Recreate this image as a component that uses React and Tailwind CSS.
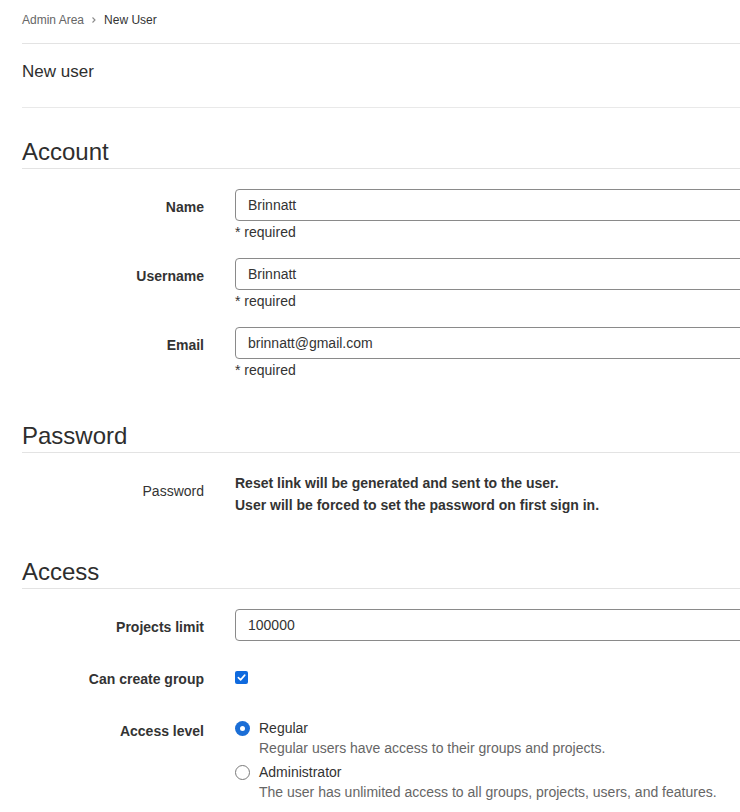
import React from "react"

const font = { fontFamily: '"Liberation Sans", Arial, sans-serif' }

const SectionTitle = ({ children, className = "" }) => (
  <h3 className={`text-[24px] leading-[32px] text-[#2e2e2e] border-b border-[#e3e3e3] ${className}`}>
    {children}
  </h3>
)

const TextRow = ({ label, value, className = "" }) => (
  <div className={`grid grid-cols-[182px_1fr] gap-x-[31px] ${className}`}>
    <label className="text-right text-[14px] leading-[20px] pt-[8px] font-bold text-[#333]">{label}</label>
    <div>
      <div className="w-[600px] h-[32px] border border-[#8a8a8a] rounded-[4px] flex items-center px-[12px] text-[14px] text-[#333]">
        {value}
      </div>
      <p className="pt-[1px] text-[14px] leading-[20px] text-[#333]">* required</p>
    </div>
  </div>
)

const Radio = ({ checked }) =>
  checked ? (
    <span className="w-[15px] h-[15px] rounded-full bg-[#1b6ed6] flex items-center justify-center shrink-0">
      <span className="w-[5px] h-[5px] rounded-full bg-white" />
    </span>
  ) : (
    <span className="w-[15px] h-[15px] rounded-full border border-[#7a7a7a] bg-white shrink-0" />
  )

export default function App() {
  return (
    <div className="w-[740px] min-h-[812px] bg-white overflow-hidden pl-[22px] text-[#333]" style={font}>
      {/* breadcrumb */}
      <div className="flex items-center pt-[10px] pb-[13px] text-[12px] leading-[20px] border-b border-[#e3e3e3]">
        <span className="text-[#666]">Admin Area</span>
        <svg className="mx-[6px]" width="8" height="8" viewBox="0 0 8 8" fill="none">
          <path d="M2.5 1.5L5 4L2.5 6.5" stroke="#8a8a8a" strokeWidth="1.1" />
        </svg>
        <span className="text-[#333]">New User</span>
      </div>

      <div className="pt-[16px] pb-[23px] border-b border-[#e9e9e9]">
        <h2 className="text-[17px] leading-[24px] text-[#2e2e2e]">New user</h2>
      </div>

      <SectionTitle className="mt-[28px]">Account</SectionTitle>
      <div className="pt-[20px]">
        <TextRow label="Name" value="Brinnatt" className="mb-[16px]" />
        <TextRow label="Username" value="Brinnatt" className="mb-[16px]" />
        <TextRow label="Email" value="brinnatt@gmail.com" />
      </div>

      <SectionTitle className="mt-[40px]">Password</SectionTitle>
      <div className="grid grid-cols-[182px_1fr] gap-x-[31px] pt-[19px]">
        <label className="text-right text-[14px] leading-[20px] pt-[9px] text-[#333]">Password</label>
        <div className="text-[14px] leading-[22px] font-bold text-[#333]">
          <p>Reset link will be generated and sent to the user.</p>
          <p>User will be forced to set the password on first sign in.</p>
        </div>
      </div>

      <SectionTitle className="mt-[40px]">Access</SectionTitle>
      <div className="pt-[20px]">
        <div className="grid grid-cols-[182px_1fr] gap-x-[31px]">
          <label className="text-right text-[14px] leading-[20px] pt-[8px] font-bold text-[#333]">Projects limit</label>
          <div className="w-[600px] h-[32px] border border-[#8a8a8a] rounded-[4px] flex items-center px-[12px] text-[14px] text-[#333]">
            100000
          </div>
        </div>

        <div className="grid grid-cols-[182px_1fr] gap-x-[31px] mt-[28px]">
          <label className="text-right text-[14px] leading-[20px] font-bold text-[#333]">Can create group</label>
          <div className="pt-[2px]">
            <span className="w-[13px] h-[13px] rounded-[2px] bg-[#0f6ade] flex items-center justify-center">
              <svg width="9" height="9" viewBox="0 0 10 10" fill="none">
                <path d="M1.5 5.2L4 7.6L8.6 2.4" stroke="white" strokeWidth="1.8" strokeLinecap="round" strokeLinejoin="round" />
              </svg>
            </span>
          </div>
        </div>

        <div className="grid grid-cols-[182px_1fr] gap-x-[31px] mt-[29px]">
          <label className="text-right text-[14px] leading-[20px] pt-[3px] font-bold text-[#333]">Access level</label>
          <div className="text-[14px] leading-[20px]">
            <div className="flex items-center gap-[9px]">
              <Radio checked />
              <span className="text-[#333]">Regular</span>
            </div>
            <p className="pl-[24px] text-[#666]">Regular users have access to their groups and projects.</p>
            <div className="flex items-center gap-[9px] mt-[4px]">
              <Radio />
              <span className="text-[#333]">Administrator</span>
            </div>
            <p className="pl-[24px] text-[#666]">The user has unlimited access to all groups, projects, users, and features.</p>
          </div>
        </div>
      </div>
    </div>
  )
}
